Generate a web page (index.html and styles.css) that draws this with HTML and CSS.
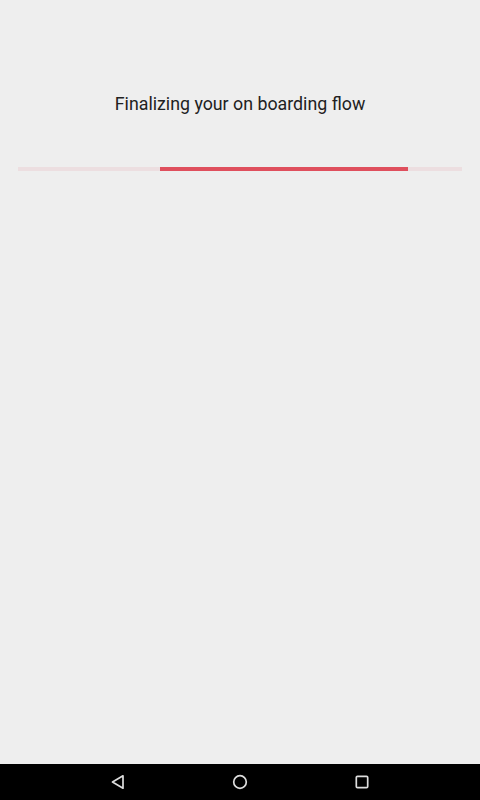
FILE: index.html
```html
<!DOCTYPE html>
<html lang="en">
<head>
    <meta charset="UTF-8">
    <meta name="viewport" content="width=device-width, initial-scale=1.0">
    <title>On boarding</title>
    <link rel="stylesheet" href="styles.css">
</head>
<body>
    <div class="screen">
        <div class="content">
            <h1 class="title">Finalizing your on boarding flow</h1>
            <div class="progress">
                <div class="progress-bar"></div>
            </div>
        </div>
        <nav class="navbar">
            <svg class="nav-icon" width="18" height="18" viewBox="0 0 18 18">
                <path d="M14 2.8 L3.5 9 L14 15.2 Z" fill="none" stroke="#ddd" stroke-width="1.7" stroke-linejoin="round"/>
            </svg>
            <svg class="nav-icon" width="18" height="18" viewBox="0 0 18 18">
                <circle cx="9" cy="9" r="6.3" fill="none" stroke="#ddd" stroke-width="1.7"/>
            </svg>
            <svg class="nav-icon" width="18" height="18" viewBox="0 0 18 18">
                <rect x="3.3" y="3.3" width="11.4" height="11.4" rx="1.2" fill="none" stroke="#ddd" stroke-width="1.7"/>
            </svg>
        </nav>
    </div>
</body>
</html>
```

FILE: styles.css
```css
body {
    margin: 0;
    padding: 0;
    font-family: Roboto, 'Noto Sans', Arial, sans-serif;
    background-color: #eeeeee;
}

.screen {
    width: 480px;
    height: 800px;
    display: flex;
    flex-direction: column;
}

.content {
    flex: 1;
    padding: 0 18px;
}

.title {
    margin: 93px 0 0;
    text-align: center;
    font-size: 17.8px;
    font-weight: 400;
    line-height: 22px;
    color: #212121;
}

.progress {
    margin-top: 52px;
    height: 4px;
    background-color: #ecdee0;
    position: relative;
}

.progress-bar {
    position: absolute;
    left: 142px;
    width: 248px;
    top: 0;
    bottom: 0;
    background-color: #df4f5d;
}

.navbar {
    height: 36px;
    background-color: #000;
    display: flex;
    justify-content: center;
    align-items: center;
    gap: 104px;
}

.nav-icon {
    display: block;
}
```
